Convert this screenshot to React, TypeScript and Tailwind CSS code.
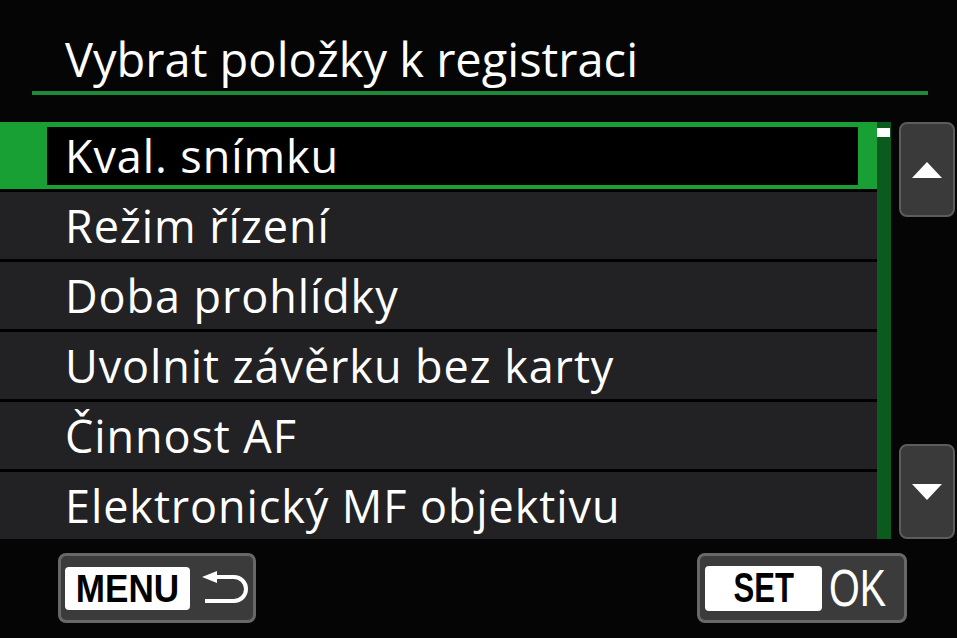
const items = [
  'Kval. snímku',
  'Režim řízení',
  'Doba prohlídky',
  'Uvolnit závěrku bez karty',
  'Činnost AF',
  'Elektronický MF objektivu',
];

const narrow = { fontFamily: '"Liberation Sans", Arial, sans-serif' };

function ArrowButton({ dir }: { dir: 'up' | 'down' }) {
  return (
    <div className="flex items-center justify-center w-[56px] h-[95px] rounded-lg border-2 border-[#5c5c5c] bg-[#3a3a3a]">
      <svg width="30" height="16" viewBox="0 0 30 16">
        {dir === 'up' ? (
          <polygon points="15,0 30,16 0,16" fill="#fff" />
        ) : (
          <polygon points="0,0 30,0 15,16" fill="#fff" />
        )}
      </svg>
    </div>
  );
}

export default function App() {
  return (
    <div
      className="w-[957px] h-[638px] bg-[#050505] text-white overflow-hidden flex flex-col"
      style={{ fontFamily: '"Open Sans", "Noto Sans", sans-serif' }}
    >
      {/* Title */}
      <div className="pt-[34px] pl-[65px] text-[47px] leading-[50px]">Vybrat položky k registraci</div>
      <div className="mt-[7px] ml-[32px] w-[896px] h-[4px] bg-[#1c8a36]" />

      {/* List + scroll */}
      <div className="mt-[27px] flex">
        <div className="w-[877px] flex flex-col tracking-[0.9px]">
          {items.map((label, i) => (
            <div key={label} className="border-b-[3px] border-black last:border-b-0">
              {i === 0 ? (
                <div className="h-[67px] bg-[#18a034] pt-[5px] pb-[4px] pl-[47px] pr-[19px]">
                  <div className="h-full bg-black pl-[18px] flex items-center text-[45px] leading-[58px]">
                    {label}
                  </div>
                </div>
              ) : (
                <div className="h-[67px] bg-[#222123] pl-[65px] flex items-center text-[45px] leading-[67px]">
                  {label}
                </div>
              )}
            </div>
          ))}
        </div>
        <div className="w-[14px] h-[417px] bg-[#0b5a1e] pt-[6px]">
          <div className="w-[13px] h-[9px] bg-white" />
        </div>
        <div className="ml-[8px] h-[417px] flex flex-col justify-between">
          <ArrowButton dir="up" />
          <ArrowButton dir="down" />
        </div>
      </div>

      {/* Bottom buttons */}
      <div className="mt-[14px] flex justify-between pl-[58px] pr-[50px]">
        <div className="w-[198px] h-[70px] rounded-lg border-[3px] border-[#686868] bg-[#3b3b3b] flex items-center pl-[4px]">
          <div className="w-[125px] h-[43px] rounded-[4px] bg-white text-black flex items-center justify-center">
            <span className="inline-block font-bold text-[39px] leading-none scale-x-[0.9]" style={narrow}>
              MENU
            </span>
          </div>
          <svg className="ml-[12px]" width="48" height="34" viewBox="0 0 48 34">
            <polygon points="0,6 15,0 15,12" fill="#fff" />
            <path d="M14 6 H32 A12 12 0 0 1 32 30 H3" fill="none" stroke="#fff" strokeWidth="4" />
          </svg>
        </div>
        <div className="w-[210px] h-[70px] rounded-lg border-[3px] border-[#686868] bg-[#3b3b3b] flex items-center pl-[5px]">
          <div className="w-[125px] h-[45px] rounded-[4px] bg-white text-black flex items-center justify-center">
            <span className="inline-block font-bold text-[42px] leading-none scale-x-[0.74]" style={narrow}>
              SET
            </span>
          </div>
          <span
            className="inline-block ml-[7px] text-[52px] leading-none scale-x-[0.76] origin-left"
            style={narrow}
          >
            OK
          </span>
        </div>
      </div>
    </div>
  );
}
